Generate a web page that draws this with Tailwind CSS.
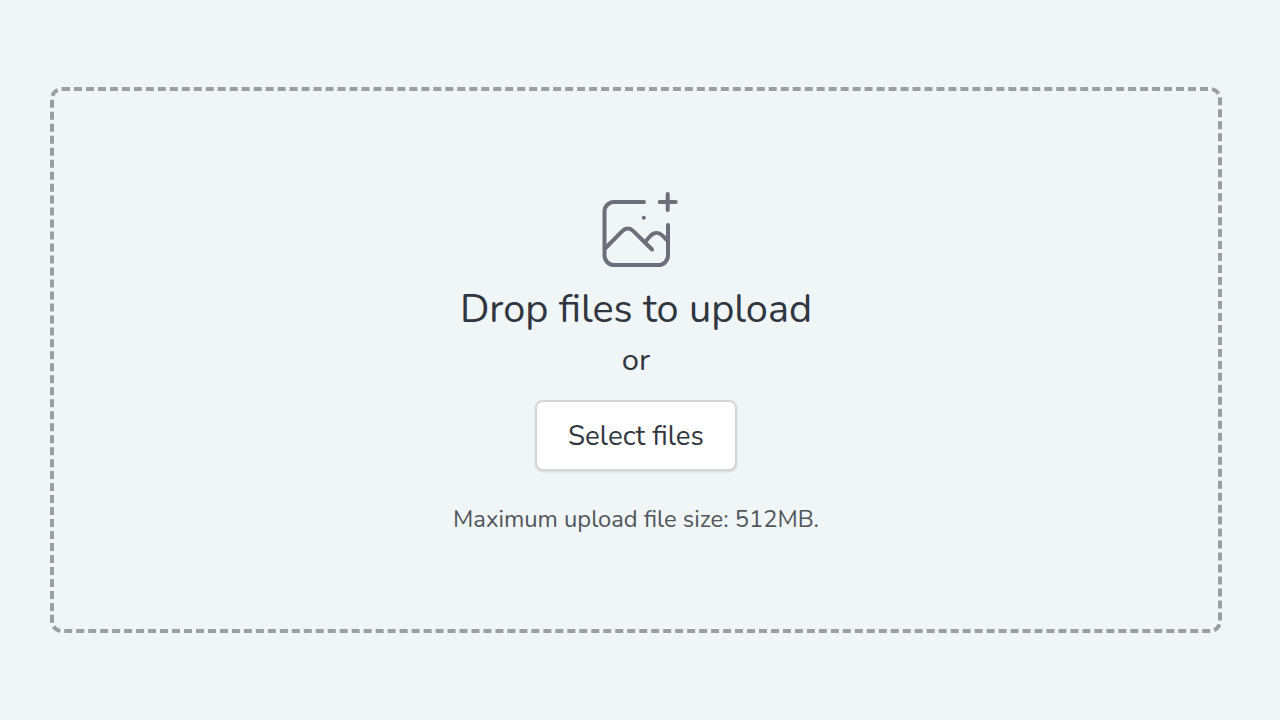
<!DOCTYPE html>
<html lang="en">
<head>
    <meta charset="UTF-8">
    <meta name="viewport" content="width=device-width, initial-scale=1.0">
    <title>Upload files</title>
    <script src="https://cdn.jsdelivr.net/npm/@tailwindcss/browser@4"></script>
</head>
<body class="bg-[#f0f6f7] h-screen overflow-hidden pt-[87px] pl-[50px] font-['Nunito','Lato',sans-serif] text-[#30363f]">

    <!-- Drop zone -->
    <main class="w-[1172px] h-[546px] border-4 border-dashed border-[#9b9fa3] rounded-xl pt-[99px] flex flex-col items-center">
        <svg class="w-[88px] h-20" viewBox="0 0 88 80" fill="none" stroke="#6c6e79" stroke-width="4" stroke-linecap="round" stroke-linejoin="round">
            <path d="M52 12H22a9.5 9.5 0 0 0-9.5 9.5v44a9.5 9.5 0 0 0 9.5 9.5h44.5a9.5 9.5 0 0 0 9.5-9.5V35"/>
            <path d="M13 58.5l17-17.2c3.6-3.6 8-3.6 11.6 0L60 59.5"/>
            <path d="M53 52l5.3-6c3.6-3.8 8.6-3.8 12.2-.4L76 51"/>
            <path d="M75.7 4v16M67.7 12h16"/>
            <circle cx="51.8" cy="27.7" r="2" fill="#6c6e79" stroke="none"/>
        </svg>

        <h1 class="mt-3 text-[39.7px] leading-[54px] whitespace-nowrap">Drop files to upload</h1>
        <p class="mt-1 text-[31px] leading-10">or</p>

        <button type="button" class="mt-5 w-[202px] h-[71px] bg-white border-2 border-[#d4d6d8] rounded-lg shadow-sm text-[27.7px] leading-9 whitespace-nowrap">Select files</button>

        <p class="mt-8 text-[23.75px] leading-8 text-[#50565c] whitespace-nowrap">Maximum upload file size: 512MB.</p>
    </main>

</body>
</html>
